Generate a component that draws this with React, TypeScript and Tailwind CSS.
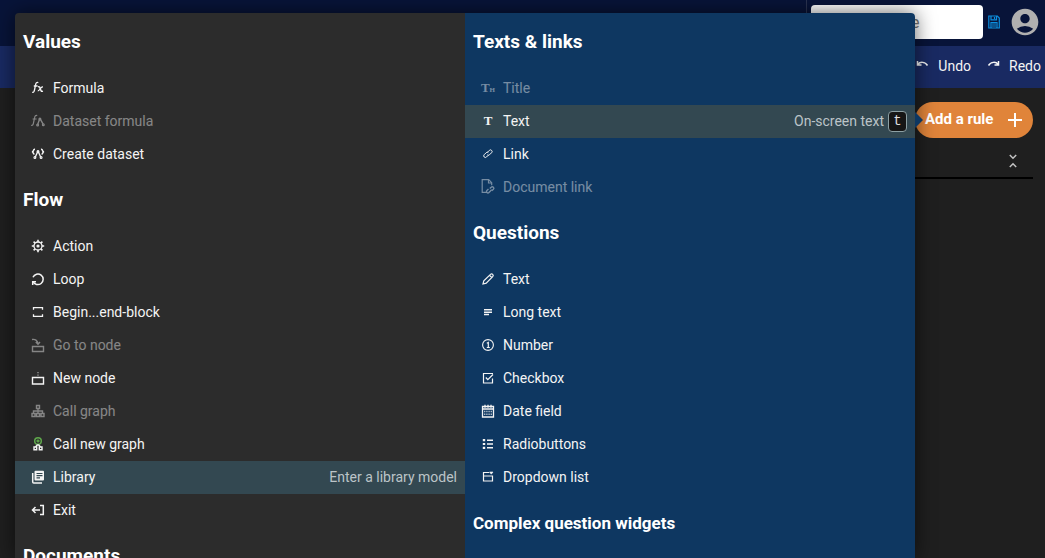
import type { ReactNode } from "react";
import { MdAccountCircle } from "react-icons/md";

interface MenuItem {
  label: string;
  icon: ReactNode;
  disabled?: boolean;
  active?: boolean;
  hint?: string;
  shortcut?: string;
}

interface MenuSection {
  title: string;
  small?: boolean;
  items: MenuItem[];
}

function Glyph({ children }: { children: ReactNode }) {
  return (
    <svg
      viewBox="0 0 14 14"
      className="size-[14px] shrink-0 overflow-visible"
      fill="none"
      stroke="currentColor"
      strokeWidth="1.2"
      aria-hidden="true"
    >
      {children}
    </svg>
  );
}

function SerifGlyph({ children }: { children: ReactNode }) {
  return (
    <span
      className="flex w-[14px] shrink-0 items-end justify-center font-['Liberation_Serif',serif] text-[13px] leading-4 font-bold"
      aria-hidden="true"
    >
      {children}
    </span>
  );
}

const valuesSection: MenuSection = {
  title: "Values",
  items: [
    {
      label: "Formula",
      icon: (
        <Glyph>
          <path d="M1.2 11.2c1.6.5 2-.8 2.4-2.7L4.6 3.6c.3-1.7 1.1-2.5 2.7-2M2.8 5h3.8" strokeWidth="1.3" />
          <path d="M7 5.9c1.6-.6 1.9.5 2.4 2 .5 1.7.9 2.9 2.5 2.2" strokeWidth="1.5" />
          <path d="M12 5.8c-1.8-.2-2.4 1.3-3 2.3-.5 1-1 1.9-2.2 1.8" />
        </Glyph>
      ),
    },
    {
      label: "Dataset formula",
      disabled: true,
      icon: (
        <Glyph>
          <path d="M.2 11.4c1.5.4 1.9-.8 2.3-2.6L3.6 3.7c.3-1.8 1.1-2.6 2.6-2.1M1.6 5h4" />
          <path d="M8.5 5.2 6.8 10.2M9.3 5.2l2.7 4.6" strokeWidth="1.4" />
          <circle cx="8.9" cy="5" r=".9" fill="currentColor" />
          <circle cx="6.6" cy="11" r=".9" />
          <circle cx="12.3" cy="10.7" r=".9" />
        </Glyph>
      ),
    },
    {
      label: "Create dataset",
      icon: (
        <Glyph>
          <path
            d="M4 2.2C2.6 2 2.600 3 2.400 3.700 2.200 4.400 1.800 4.700 1 4.800c1 .2 1.200.7 1.300 1.300.1.600.4 1 1.200 1M10 2.200c1.400-.2 1.400.8 1.600 1.500.2.700.6 1 1.400 1.100-1 .2-1.200.7-1.300 1.300-.1.600-.4 1-1.200 1"
            strokeWidth="1.5"
          />
          <path d="M6.600 5 4.300 10M7.400 5l2.300 5" strokeWidth="1.4" />
          <circle cx="7" cy="4.400" r=".9" fill="currentColor" />
          <circle cx="3.900" cy="10.600" r=".9" />
          <circle cx="10.100" cy="10.600" r=".9" />
        </Glyph>
      ),
    },
  ],
};

const flowSection: MenuSection = {
  title: "Flow",
  items: [
    {
      label: "Action",
      icon: (
        <Glyph>
          <circle cx="7" cy="7" r="4" strokeWidth="1.3" />
          <circle cx="7" cy="7" r="1" fill="currentColor" />
          <path
            d="M7 .8v2.200M7 11v2.200M.8 7H3M11 7h2.200M2.600 2.600l1.600 1.600M9.800 9.800l1.600 1.600M2.600 11.400l1.600-1.600M9.800 4.200l1.600-1.600"
            strokeWidth="1.6"
          />
        </Glyph>
      ),
    },
    {
      label: "Loop",
      icon: (
        <Glyph>
          <path d="M2 5.200a5.300 5.300 0 1 1 0 4.200" strokeWidth="1.5" />
          <path d="M1.700 13V9.700H5" strokeWidth="1.5" />
        </Glyph>
      ),
    },
    {
      label: "Begin...end-block",
      icon: (
        <Glyph>
          <path d="M2.500 4.800V2.600h9v2.200M2.500 9.200v2.200h9V9.200" strokeWidth="1.3" />
        </Glyph>
      ),
    },
    {
      label: "Go to node",
      disabled: true,
      icon: (
        <Glyph>
          <path d="M1.500 8.500h11v5h-11zM1 1.500c3-.5 5.500.5 6 4.500M4.800 4l2.200 2.200L9 4" strokeWidth="1.4" />
        </Glyph>
      ),
    },
    {
      label: "New node",
      icon: (
        <Glyph>
          <path d="M1.500 6.500h11v6.500h-11z" strokeWidth="1.4" />
          <path d="M7 1v1.200M7 3.500v1.200" opacity=".6" />
        </Glyph>
      ),
    },
    {
      label: "Call graph",
      disabled: true,
      icon: (
        <Glyph>
          <path
            d="M5.500 1.500h3v3h-3zM1 9.500h3v3H1zM5.500 9.500h3v3h-3zM10 9.500h3v3h-3zM7 4.500v5M2.500 9.500V7h9v2.500"
            strokeWidth="1.4"
          />
        </Glyph>
      ),
    },
    {
      label: "Call new graph",
      icon: (
        <Glyph>
          <circle cx="7" cy="4" r="3.3" stroke="#5fa84c" strokeWidth="1.5" />
          <path d="M7 2.400v3.200M5.400 4h3.200" stroke="#5fa84c" strokeWidth="1.5" />
          <path d="M3 10h2.700v2.700H3zM8.300 10H11v2.700H8.300zM4.500 10 6.200 8h1.600l1.700 2" strokeWidth="1.4" />
        </Glyph>
      ),
    },
    {
      label: "Library",
      active: true,
      hint: "Enter a library model",
      icon: (
        <Glyph>
          <path d="M1.700 3v9a1 1 0 0 0 1 1H11" strokeWidth="1.5" />
          <path
            d="M4.500 .8h7.500a1 1 0 0 1 1 1v7.700a1 1 0 0 1-1 1H4.500a1 1 0 0 1-1-1V1.800a1 1 0 0 1 1-1z"
            fill="currentColor"
            stroke="none"
          />
          <path d="M5.500 3.500h6M5.500 5.700h6M5.500 7.900h3.500" stroke="#334851" />
        </Glyph>
      ),
    },
    {
      label: "Exit",
      icon: (
        <Glyph>
          <path d="M1.500 7H9M4.500 4l-3 3 3 3M9 2.500h3.300v9H9" strokeWidth="1.5" />
        </Glyph>
      ),
    },
  ],
};

const textsSection: MenuSection = {
  title: "Texts & links",
  items: [
    {
      label: "Title",
      disabled: true,
      icon: (
        <SerifGlyph>
          T<span className="text-[7px] leading-3">H</span>
        </SerifGlyph>
      ),
    },
    {
      label: "Text",
      active: true,
      hint: "On-screen text",
      shortcut: "t",
      icon: <SerifGlyph>T</SerifGlyph>,
    },
    {
      label: "Link",
      icon: (
        <Glyph>
          <path
            d="M6.300 5.400 8.300 3.400a1.500 1.500 0 0 1 2.300 2.300L8.600 7.700a1.500 1.500 0 0 1-2.100 0M7.500 8 5.500 10a1.500 1.500 0 0 1-2.300-2.300L5.200 5.700a1.500 1.500 0 0 1 2.100 0"
            strokeWidth="1"
          />
        </Glyph>
      ),
    },
    {
      label: "Document link",
      disabled: true,
      icon: (
        <Glyph>
          <path d="M6 12.300H1.200V-.3h6.500l3 3v2.500M7.500-.3v3.300h3.200" />
          <path
            d="m8.800 8.600 1.400-1.400a1.400 1.400 0 0 1 2.200 2.100l-1.600 1.500M10.700 9.600l-1.500 1.700-1.200 1.200a1.400 1.400 0 0 1-2.100-2l1.600-1.500"
            strokeWidth="1.4"
          />
        </Glyph>
      ),
    },
  ],
};

const questionsSection: MenuSection = {
  title: "Questions",
  items: [
    {
      label: "Text",
      icon: (
        <Glyph>
          <path d="m2 12 .8-3.300 6.700-6.300a1.500 1.500 0 0 1 2.200 2.200L5.200 11.200zM8.600 3.400l2.100 2.100" />
        </Glyph>
      ),
    },
    {
      label: "Long text",
      icon: (
        <Glyph>
          <path d="M3 4.800h8M3 7.200h8M3 9.600h5" strokeWidth="1.5" />
        </Glyph>
      ),
    },
    {
      label: "Number",
      icon: (
        <Glyph>
          <circle cx="7" cy="7" r="5.4" strokeWidth="1.1" />
          <path d="M5.800 5.200 7.300 4.500v5M5.800 9.500h3" />
        </Glyph>
      ),
    },
    {
      label: "Checkbox",
      icon: (
        <Glyph>
          <path d="M12 2.500H2.500v9.500h9V7.500" />
          <path d="M4.800 6.500l2 2.200L12 3.500" />
        </Glyph>
      ),
    },
    {
      label: "Date field",
      icon: (
        <Glyph>
          <path d="M1.500 2.500h11v10.500h-11zM1.500 5h11M4 .8v3M7 .8v3M10 .8v3" strokeWidth="1.3" />
          <path d="M3 7.500h8M3 10.300h8" strokeDasharray="1.4 .8" strokeWidth="1.6" opacity=".7" />
        </Glyph>
      ),
    },
    {
      label: "Radiobuttons",
      icon: (
        <Glyph>
          <path d="M1.800 3.200h2.400M1.800 7h2.400M1.800 10.800h2.400" strokeWidth="2.2" />
          <path d="M6 3.200h6M6 7h6M6 10.800h6" strokeWidth="1.4" />
        </Glyph>
      ),
    },
    {
      label: "Dropdown list",
      icon: (
        <Glyph>
          <path d="M8 2.500H2.500v8.500h9V5.500M2.500 6h9" />
          <path d="M8.500 2h3.500L10.300 4.200z" fill="currentColor" strokeWidth=".6" />
        </Glyph>
      ),
    },
  ],
};

const leftSections: MenuSection[] = [
  valuesSection,
  flowSection,
  { title: "Documents", items: [] },
];

const rightSections: MenuSection[] = [
  textsSection,
  questionsSection,
  { title: "Complex question widgets", small: true, items: [] },
];

function MenuRow({ item }: { item: MenuItem }) {
  return (
    <li>
      <button
        type="button"
        disabled={item.disabled}
        className={`flex h-[33px] w-full items-center gap-2 pr-2 pb-px pl-4 text-left text-sm text-[#f4f4f4] ${
          item.active ? "bg-[#334851]" : ""
        }`}
      >
        <span className={`flex flex-1 items-center gap-2 ${item.disabled ? "opacity-45" : ""}`}>
          {item.icon}
          {item.label}
        </span>
        {item.hint && (
          <span className="flex items-center gap-1 text-[#bcc4c8]">
            {item.hint}
            {item.shortcut && (
              <kbd className="flex h-[21px] w-[19px] items-center justify-center rounded-sm border border-[#8da0a4] bg-[#161616] font-['Liberation_Mono',monospace] text-sm text-[#e0e0e0]">
                {item.shortcut}
              </kbd>
            )}
          </span>
        )}
      </button>
    </li>
  );
}

function MenuColumn({ sections }: { sections: MenuSection[] }) {
  return (
    <>
      {sections.map((section) => (
        <section key={section.title}>
          <h2
            className={`flex h-[59px] items-center px-2 pb-px font-bold text-white ${
              section.small ? "text-[17px]" : "text-[19px]"
            }`}
          >
            {section.title}
          </h2>
          <ul>
            {section.items.map((item) => (
              <MenuRow key={item.label} item={item} />
            ))}
          </ul>
        </section>
      ))}
    </>
  );
}

function AddRuleMenu() {
  return (
    <div className="absolute top-[13px] right-[130px] bottom-0 left-[15px] rounded-t shadow-[0_0_20px_rgba(0,0,0,0.6)]">
      <div className="grid h-full grid-cols-2 overflow-hidden rounded-t">
        <div className="overflow-hidden bg-[#2c2c2c]">
          <MenuColumn sections={leftSections} />
        </div>
        <div className="overflow-hidden bg-[#0e3761]">
          <MenuColumn sections={rightSections} />
        </div>
      </div>
      {/* Pointer towards the add button */}
      <svg viewBox="0 0 8 16" className="absolute top-[99px] left-full h-4 w-2" aria-hidden="true">
        <path d="M0 0l8 8-8 8z" fill="#0e3761" />
      </svg>
    </div>
  );
}

export default function App() {
  return (
    <div className="relative min-h-screen overflow-hidden bg-[#1f1f1f] font-[Roboto,sans-serif] text-sm text-[#f4f4f4]">
      <header className="flex h-[46px] items-center justify-end bg-[#081439] pr-1 pb-[2px]">
        <div className="mr-1 h-full w-px bg-[#2b3452]" />
        <input
          type="text"
          aria-label="Search"
          placeholder="Search by code"
          className="h-[34px] w-[172px] rounded-sm bg-white text-base text-black placeholder:text-[#757575]"
        />
        <button type="button" aria-label="Save" className="ml-[5px]">
          <svg viewBox="0 0 12 14" className="h-[14px] w-3" fill="none" stroke="#0c8fe0" strokeWidth="1.2">
            <path d="M.8 1h8.500l2 2v10H.8zM3 1v3.800h5.500V1M6.500 2v2M3 13V7.500h6V13M4 9h4M4 11h4" />
          </svg>
        </button>
        <button type="button" aria-label="Account" className="ml-[9px]">
          <MdAccountCircle className="size-8 text-[#b0b0b0]" />
        </button>
      </header>

      <nav className="flex h-[42px] items-center justify-end gap-4 bg-[#192a62] pr-1 pb-0.5">
        <button type="button" className="flex items-center gap-2">
          <svg viewBox="0 0 14 14" className="size-[14px]" fill="none" stroke="currentColor" strokeWidth="1.5">
            <path d="M1.500 2v4h4M1.800 5.500C4 2.500 9 2.500 11.500 6.500" />
          </svg>
          Undo
        </button>
        <button type="button" className="flex items-center gap-2">
          <svg viewBox="0 0 14 14" className="size-[14px]" fill="none" stroke="currentColor" strokeWidth="1.5">
            <path d="M11.500 2v4h-4M11.200 5.500C9 2.500 4 2.500 1.500 6.500" />
          </svg>
          Redo
        </button>
      </nav>

      <main className="pt-[14px] pr-3 pl-6">
        <div className="flex flex-col items-end border-b-2 border-black pb-[9px]">
          <button
            type="button"
            className="flex h-9 w-[118px] items-center justify-between rounded-full bg-[#e0843a] px-[10px] text-[15px] font-bold text-white"
          >
            Add a rule
            <svg viewBox="0 0 16 16" className="size-4" stroke="currentColor" strokeWidth="2" aria-hidden="true">
              <path d="M8 1v14M1 8h14" />
            </svg>
          </button>
          <button type="button" aria-label="Collapse all" className="mt-4 mr-4">
            <svg viewBox="0 0 8 14" className="h-[14px] w-2" fill="none" stroke="#c4c4c4" strokeWidth="1.5">
              <path d="M.8 1 4 4.200 7.200 1M.8 13 4 9.800 7.200 13" />
            </svg>
          </button>
        </div>
      </main>

      <AddRuleMenu />
    </div>
  );
}
